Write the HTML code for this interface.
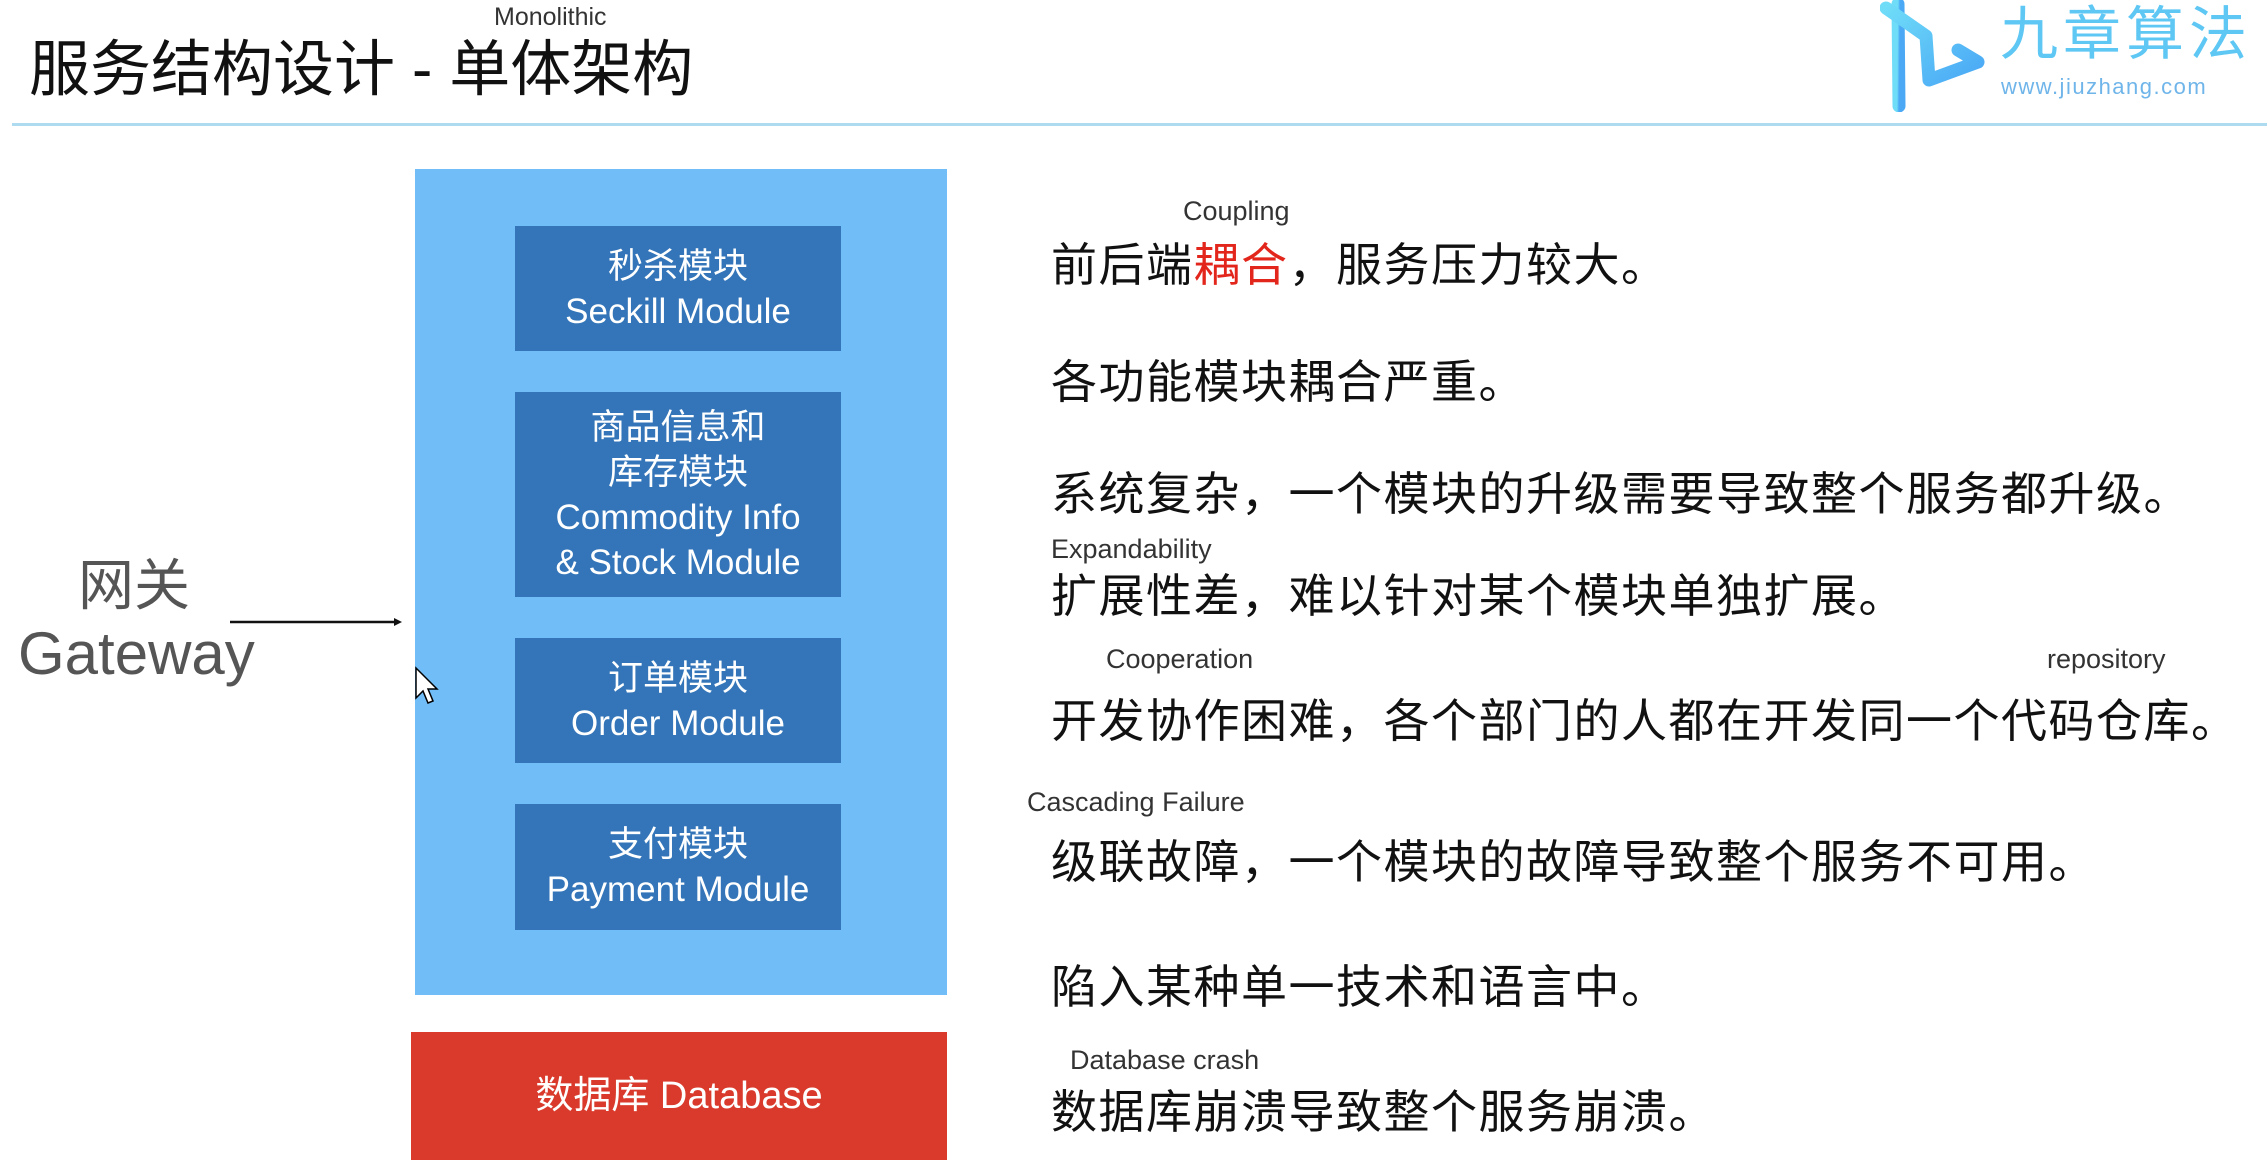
<!DOCTYPE html>
<html><head><meta charset="utf-8"><style>
body{margin:0;width:2267px;height:1172px;background:#fff;position:relative;overflow:hidden;font-family:"Liberation Sans","Noto Sans CJK SC",sans-serif;}
.a{position:absolute;white-space:nowrap;}
.mod{position:absolute;left:515px;width:326px;background:#3375b8;color:#fff;font-size:35px;line-height:45px;display:flex;flex-direction:column;justify-content:center;align-items:center;text-align:center;}
.t{position:absolute;left:1051px;font-size:46px;line-height:50px;color:#111;letter-spacing:1.5px;white-space:nowrap;}
.s{position:absolute;font-size:27px;line-height:30px;color:#333;white-space:nowrap;}
</style></head><body>
<div class="a" style="left:29px;top:36px;font-size:61px;line-height:66px;color:#111;">服务结构设计 - 单体架构</div>
<div class="a" style="left:494px;top:3px;font-size:25px;line-height:28px;color:#333;">Monolithic</div>
<div class="a" style="left:12px;top:123px;width:2255px;height:3px;background:#aedbf0;"></div>
<svg class="a" style="left:1880px;top:0px" width="115" height="112" viewBox="0 0 115 112">
<defs><linearGradient id="g" x1="0" y1="0" x2="1" y2="1"><stop offset="0" stop-color="#6fdcf8"/><stop offset="1" stop-color="#4aa8f5"/></linearGradient></defs>
<path d="M18 4 L19 106" stroke="url(#g)" stroke-width="13" fill="none" stroke-linecap="round"/>
<path d="M6 8 L46 36 L49 80 L98 62 L78 50" stroke="url(#g)" stroke-width="13" fill="none" stroke-linecap="round" stroke-linejoin="round"/>
</svg>
<div class="a" style="left:2000px;top:2px;font-size:58px;line-height:66px;color:#5ec7f4;letter-spacing:5px;">九章算法</div>
<div class="a" style="left:2001px;top:74px;font-size:22px;line-height:26px;color:#6fb5ea;letter-spacing:1.5px;">www.jiuzhang.com</div>

<div class="a" style="left:415px;top:169px;width:532px;height:826px;background:#70bdf8;"></div>
<div class="mod" style="top:226px;height:125px;"><div>秒杀模块</div><div>Seckill Module</div></div>
<div class="mod" style="top:392px;height:205px;"><div>商品信息和</div><div>库存模块</div><div>Commodity Info</div><div>&amp; Stock Module</div></div>
<div class="mod" style="top:638px;height:125px;"><div>订单模块</div><div>Order Module</div></div>
<div class="mod" style="top:804px;height:126px;"><div>支付模块</div><div>Payment Module</div></div>
<div class="a" style="left:411px;top:1032px;width:536px;height:128px;background:#d93a2b;color:#fff;font-size:38px;line-height:128px;text-align:center;">数据库 Database</div>

<div class="a" style="left:78px;top:556px;font-size:56px;line-height:60px;color:#555;">网关</div>
<div class="a" style="left:18px;top:620px;font-size:60px;line-height:68px;color:#555;">Gateway</div>
<svg class="a" style="left:228px;top:614px" width="175" height="16"><line x1="2" y1="8" x2="168" y2="8" stroke="#111" stroke-width="2.5"/><path d="M166 4 L174 8 L166 12Z" fill="#111"/></svg>
<svg class="a" style="left:414px;top:666px" width="26" height="40"><path d="M2 2 L2 32 L9 25 L14 37 L19 35 L14 23 L23 23 Z" fill="#fff" stroke="#000" stroke-width="1.5"/></svg>

<div class="s" style="left:1183px;top:196px;">Coupling</div>
<div class="t" style="top:240px;">前后端<span style="color:#e3261c">耦合</span>，服务压力较大。</div>
<div class="t" style="top:357px;">各功能模块耦合严重。</div>
<div class="t" style="top:469px;">系统复杂，一个模块的升级需要导致整个服务都升级。</div>
<div class="s" style="left:1051px;top:534px;">Expandability</div>
<div class="t" style="top:571px;">扩展性差，难以针对某个模块单独扩展。</div>
<div class="s" style="left:1106px;top:644px;">Cooperation</div>
<div class="s" style="left:2047px;top:644px;">repository</div>
<div class="t" style="top:696px;">开发协作困难，各个部门的人都在开发同一个代码仓库。</div>
<div class="s" style="left:1027px;top:787px;">Cascading Failure</div>
<div class="t" style="top:837px;">级联故障，一个模块的故障导致整个服务不可用。</div>
<div class="t" style="top:962px;">陷入某种单一技术和语言中。</div>
<div class="s" style="left:1070px;top:1045px;">Database crash</div>
<div class="t" style="top:1087px;">数据库崩溃导致整个服务崩溃。</div>
</body></html>
